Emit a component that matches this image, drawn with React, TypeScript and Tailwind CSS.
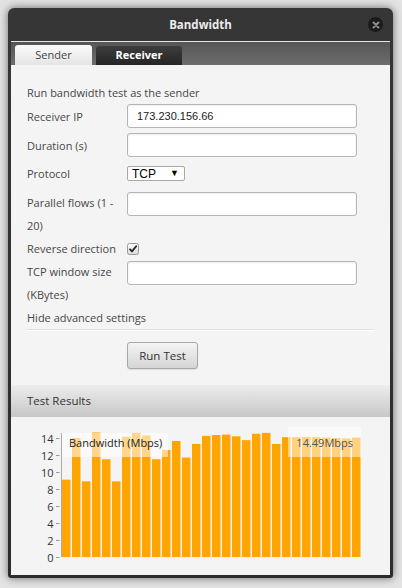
import React from "react";

const bars = [
  9.1, 14.0, 8.9, 14.65, 11.5, 8.9, 14.15, 14.6, 14.3, 11.5, 12.6, 13.65, 11.7, 13.3, 14.25,
  14.35, 14.4, 14.2, 13.75, 14.5, 14.6, 13.3, 14.1, 14.1, 14.1, 14.1, 14.05, 14.0, 13.95, 14.05,
];

const ticks = [0, 2, 4, 6, 8, 10, 12, 14];

const yOf = (v: number) => 140 - v * 8.5;

const Field = () => (
  <div className="w-[230px] h-[24px] rounded-[3px] border border-[#b5b5b5] bg-white shadow-[inset_0_1px_2px_rgba(0,0,0,0.08)]" />
);

const Chart = () => (
  <svg width="379" height="158" viewBox="0 0 379 158" className="block">
    <line x1="50.5" y1="16" x2="50.5" y2="140" stroke="#aaaaaa" strokeWidth="1" />
    {ticks.map((t) => (
      <g key={t}>
        <line x1="45" y1={yOf(t) + 0.5} x2="48.5" y2={yOf(t) + 0.5} stroke="#999999" strokeWidth="1" />
        <text
          x="42.5"
          y={yOf(t) + 4.5}
          textAnchor="end"
          fontSize="11"
          fill="#333333"
          fontFamily="'Open Sans', sans-serif"
        >
          {t}
        </text>
      </g>
    ))}
    {bars.map((v, i) => (
      <rect key={i} x={51 + i * 10} y={yOf(v)} width="8.5" height={v * 8.5} fill="#ffa500" />
    ))}
    {/* legend boxes sit over the bars */}
    <rect x="51" y="16" width="106" height="24" fill="#ffffff" fillOpacity="0.55" />
    <text x="58" y="30" fontSize="11" fill="#222222" fontFamily="'Open Sans', sans-serif">
      Bandwidth (Mbps)
    </text>
    <rect x="277" y="10" width="73" height="30" fill="#ffffff" fillOpacity="0.5" />
    <text x="342" y="30" textAnchor="end" fontSize="11" fill="#555555" fontFamily="'Open Sans', sans-serif">
      14.49Mbps
    </text>
  </svg>
);

export default function App() {
  return (
    <div className="w-[402px] h-[588px] bg-[#e3e3e3] pt-[8px] pl-[8px] font-['Open_Sans',sans-serif] text-[11px] text-[#474747]">
      <div className="w-[385px] h-[570px] rounded-t-[6px] rounded-b-[3px] bg-gradient-to-b from-[#363636] to-[#2c2c2c] px-[3px] pb-[3px] shadow-[0_0_8px_rgba(0,0,0,0.55)] flex flex-col">
        {/* title bar */}
        <div className="relative h-[33px] flex items-center justify-center">
          <span className="text-[11.5px] font-bold text-[#ececec]">Bandwidth</span>
          <div className="absolute right-[6px] top-[8px] w-[17px] h-[17px] rounded-full bg-[#1b1b1b] border border-[#3a3a3a] flex items-center justify-center">
            <svg width="8" height="8" viewBox="0 0 8 8">
              <path d="M1.5 1.5 L6.5 6.5 M6.5 1.5 L1.5 6.5" stroke="#8c8c8c" strokeWidth="2" strokeLinecap="round" />
            </svg>
          </div>
        </div>
        <div className="h-[1px] bg-[#e6e6e6]" />

        {/* tabs */}
        <div className="h-[23px] bg-gradient-to-b from-[#555555] to-[#6e6e6e] flex items-end pl-[4px] gap-[4px]">
          <div className="w-[77px] h-[20px] rounded-t-[3px] bg-gradient-to-b from-[#fbfbfb] to-[#e4e4e4] flex items-center justify-center text-[#444]">
            Sender
          </div>
          <div className="w-[86px] h-[19px] rounded-t-[3px] bg-gradient-to-b from-[#3d3d3d] to-[#252525] flex items-center justify-center font-bold text-white">
            Receiver
          </div>
        </div>

        {/* content */}
        <div className="flex-1 bg-[#f4f4f4] flex flex-col">
          <div className="px-[16px] pt-[16px]">
            <div className="leading-[23px]">Run bandwidth test as the sender</div>

            <div className="flex items-start">
              <div className="w-[100px] leading-[23px] pt-[0.5px]">Receiver IP</div>
              <div className="w-[230px] h-[24px] rounded-[3px] border border-[#b5b5b5] bg-white shadow-[inset_0_1px_2px_rgba(0,0,0,0.08)] pl-[9px] flex items-center font-['Liberation_Sans',Arial,sans-serif] text-[11px] text-[#222]">
                173.230.156.66
              </div>
            </div>

            <div className="flex items-start mt-[5px]">
              <div className="w-[100px] leading-[23px] pt-[0.5px]">Duration (s)</div>
              <Field />
            </div>

            <div className="flex items-start mt-[4px] h-[24px]">
              <div className="w-[100px] leading-[23px] pt-[0.5px]">Protocol</div>
              <div className="mt-[5px] w-[58px] h-[15px] border border-[#a9a9a9] rounded-[2px] bg-white flex items-center justify-between pl-[4px] pr-[5px] font-['Liberation_Sans',Arial,sans-serif] text-[12px] text-black leading-none">
                <span>TCP</span>
                <span className="text-[9px]">▼</span>
              </div>
            </div>

            <div className="flex items-start mt-[6px]">
              <div className="w-[100px] leading-[23px]">Parallel flows (1 - 20)</div>
              <div className="mt-[1px]">
                <Field />
              </div>
            </div>

            <div className="flex items-start">
              <div className="w-[100px] leading-[23px]">Reverse direction</div>
              <div className="mt-[6px]">
                <svg width="12" height="12" viewBox="0 0 12 12">
                  <defs>
                    <linearGradient id="cb" x1="0" y1="0" x2="0" y2="1">
                      <stop offset="0" stopColor="#fdfdfd" />
                      <stop offset="1" stopColor="#d9d9d9" />
                    </linearGradient>
                  </defs>
                  <rect x="0.5" y="0.5" width="11" height="11" rx="2" fill="url(#cb)" stroke="#9a9a9a" />
                  <path d="M3 6.3 L5 8.4 L9.2 3.3" fill="none" stroke="#222" strokeWidth="1.8" strokeLinecap="round" strokeLinejoin="round" />
                </svg>
              </div>
            </div>

            <div className="flex items-start">
              <div className="w-[100px] leading-[23px]">TCP window size (KBytes)</div>
              <div className="mt-[1px]">
                <Field />
              </div>
            </div>

            <div className="leading-[23px]">Hide advanced settings</div>
            <div className="h-[2px] border-t border-[#e2e2e2] border-b border-b-white" />

            <div className="pl-[100px] mt-[11px]">
              <button className="w-[71px] h-[27px] rounded-[3px] border border-[#a8a8a8] bg-gradient-to-b from-[#f4f4f4] to-[#d5d5d5] shadow-[0_1px_1px_rgba(0,0,0,0.08)] text-[11.5px] text-[#333]">
                Run Test
              </button>
            </div>
          </div>

          <div className="mt-[16px] h-[32px] bg-gradient-to-b from-[#ededed] to-[#c7c7c7] flex items-center px-[16px] text-[11.5px] text-[#333]">
            Test Results
          </div>

          <div className="flex-1">
            <Chart />
          </div>
        </div>
      </div>
    </div>
  );
}
